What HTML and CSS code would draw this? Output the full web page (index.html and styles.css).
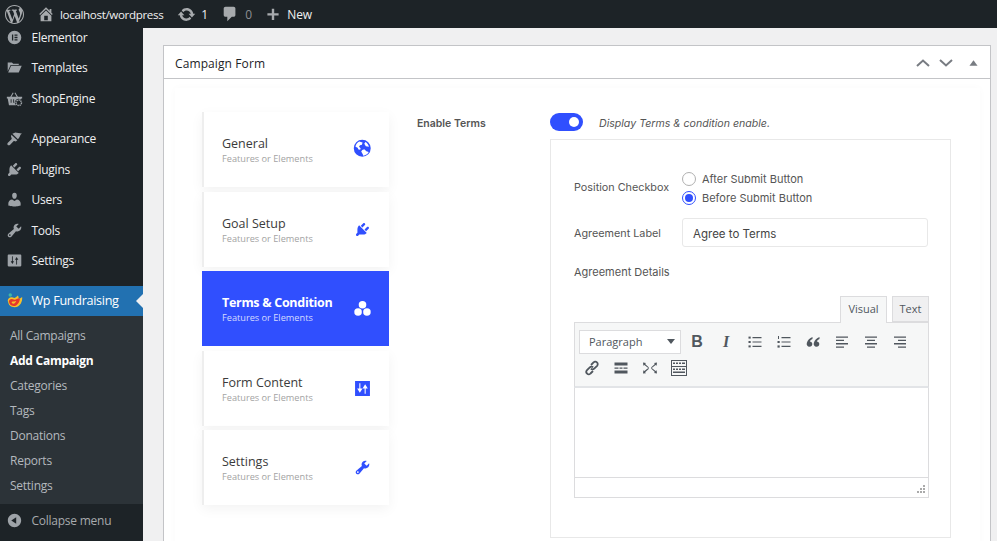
FILE: index.html
```html
<!DOCTYPE html>
<html lang="en">
<head>
<meta charset="utf-8">
<title>Add Campaign</title>
<link rel="stylesheet" href="styles.css">
</head>
<body>
<header class="adminbar">
  <svg class="bar-logo" viewBox="0 0 20 20"><path fill-rule="evenodd" d="M20 10c0-5.51-4.49-10-10-10C4.48 0 0 4.49 0 10c0 5.52 4.48 10 10 10 5.51 0 10-4.48 10-10zM7.78 15.37L4.37 6.22c.55-.02 1.17-.08 1.17-.08.5-.06.44-1.13-.06-1.11 0 0-1.45.11-2.37.11-.18 0-.37 0-.58-.01C4.12 2.69 6.87 1.11 10 1.11c2.33 0 4.45.87 6.05 2.34-.68-.11-1.65.39-1.65 1.58 0 .74.45 1.36.9 2.1.35.61.55 1.36.55 2.46 0 1.49-1.4 5-1.4 5l-3.03-8.37c.54-.02.82-.17.82-.17.5-.05.44-1.25-.06-1.22 0 0-1.44.12-2.38.12-.87 0-2.33-.12-2.33-.12-.5-.03-.56 1.2-.06 1.22l.92.08 1.26 3.41zM17.41 10c.24-.64.74-1.87.43-4.25.7 1.29 1.05 2.71 1.05 4.25 0 3.29-1.73 6.24-4.4 7.78.97-2.59 1.94-5.2 2.92-7.78zM6.1 18.09C3.12 16.65 1.11 13.53 1.11 10c0-1.3.23-2.48.72-3.59C3.25 10.3 4.67 14.2 6.1 18.09zm4.03-6.63l2.58 6.98c-.86.29-1.76.45-2.71.45-.79 0-1.57-.11-2.29-.33.81-2.38 1.62-4.74 2.42-7.1z"/></svg>
  <svg class="bar-icon home" viewBox="0 0 20 20"><path fill-rule="evenodd" d="M16 8.5l1.53 1.53-1.06 1.06L10 4.62l-6.47 6.47-1.06-1.06L10 2.5l4 4v-2h2v4zm-6-2.46l6 5.99V18H4v-5.97zM12 17v-5H8v5h4z"/></svg>
  <span class="bar-text site">localhost/wordpress</span>
  <svg class="bar-icon updates" viewBox="0 0 20 20"><path d="M10.2 3.28c3.53 0 6.43 2.61 6.92 6h2.08l-3.5 4-3.5-4h2.32c-.45-1.97-2.21-3.45-4.32-3.45-1.45 0-2.73.71-3.54 1.78L4.95 5.66C6.23 4.2 8.11 3.28 10.2 3.28zm-.4 13.44c-3.52 0-6.43-2.61-6.92-6H.8l3.5-4c1.17 1.33 2.33 2.67 3.5 4H5.48c.45 1.97 2.21 3.45 4.32 3.45 1.45 0 2.73-.71 3.54-1.78l1.71 1.95c-1.28 1.46-3.15 2.38-5.25 2.38z"/></svg>
  <span class="bar-text count">1</span>
  <svg class="bar-icon comment" viewBox="0 0 20 20"><path d="M5 2h9c1.1 0 2 .9 2 2v7c0 1.1-.9 2-2 2h-2l-5 5v-5H5c-1.1 0-2-.9-2-2V4c0-1.1.9-2 2-2z"/></svg>
  <span class="bar-text zero">0</span>
  <svg class="bar-icon plus" viewBox="0 0 20 20"><path d="M17 9v3h-5.5v5.500h-3V12H3V9h5.500V3.500h3V9z"/></svg>
  <span class="bar-text">New</span>
</header>

<div class="shell">
  <aside class="sidebar">
    <nav class="menu">
      <a class="item first">
        <svg class="mi" viewBox="0 0 20 20"><path fill-rule="evenodd" d="M10 2a8 8 0 1 1 0 16 8 8 0 0 1 0-16zM7 6.500v7h1.500v-7zm3 0V8h3.500V6.500zm0 2.750v1.500h3.500v-1.500zM10 12v1.500h3.500V12z"/></svg>
        <span>Elementor</span>
      </a>
      <a class="item">
        <svg class="mi" viewBox="0 0 20 20"><path d="M2 4h5l1.500 1.500H15V7H5.500L2 14.500zM6 8h12.500L15 16H2.500z"/></svg>
        <span>Templates</span>
      </a>
      <a class="item gap-after">
        <svg class="mi" viewBox="0 0 20 20"><path fill-rule="evenodd" d="M1 8h4l3-5 1 .6L6.500 8h6L10 3.600 11 3l3 5h5v2h-1l-.3 1.500a4 4 0 0 0-5.700 6.500H3.500L2 10H1zm4.500 3v4h1v-4zm3 0v4h1v-4z"/><circle cx="15" cy="15" r="3.200" fill="none" stroke="currentColor" stroke-width="1.700" stroke-dasharray="1.600 .8"/></svg>
        <span>ShopEngine</span>
      </a>
      <a class="item">
        <svg class="mi" viewBox="0 0 20 20"><path d="M7.500 4.500 11 3c2 .2 5 .6 8 1.500-1.300.5-2.200 1.300-2.500 2.500-.6 1.500-1.500 3-2.500 4zM6.300 5.500l7 6.500-1.700 1.500c-.8-.5-1.700-.8-2.500-.6L4.600 17.500c-.8.7-2 .7-2.600 0-.6-.7-.5-1.700.2-2.400l4.500-4.400c.2-1-.2-2-.8-2.800z"/></svg>
        <span>Appearance</span>
      </a>
      <a class="item">
        <svg class="mi" viewBox="0 0 20 20"><path d="M13.110 4.360L9.870 7.600 8 5.730l3.240-3.240c.35-.34 1.050-.2 1.560.32.520.51.660 1.210.310 1.550zm-8 1.770l.91-1.120 9.010 9.010-1.190.84c-.71.71-2.630 1.160-3.820 1.160H6.140L4.900 17.260c-.59.59-1.540.59-2.120 0-.59-.58-.59-1.530 0-2.120l1.240-1.240v-3.880c0-1.130.4-3.190 1.090-3.890zm7.260 3.970l3.240-3.240c.34-.35 1.040-.21 1.550.31.520.51.660 1.210.310 1.550l-3.240 3.250z"/></svg>
        <span>Plugins</span>
      </a>
      <a class="item">
        <svg class="mi" viewBox="0 0 20 20"><path d="M10 9.250c-2.270 0-2.730-3.440-2.730-3.440C7 4.020 7.820 2 9.970 2c2.160 0 2.980 2.020 2.710 3.810 0 0-.41 3.440-2.680 3.440zm0 2.570L12.720 10c2.390 0 4.520 2.330 4.520 4.530v2.490s-3.650 1.130-7.240 1.130c-3.650 0-7.240-1.130-7.240-1.130v-2.490c0-2.250 1.940-4.480 4.470-4.480z"/></svg>
        <span>Users</span>
      </a>
      <a class="item">
        <svg class="mi" viewBox="0 0 20 20"><path fill-rule="evenodd" d="M16.680 9.770c-1.340 1.340-3.300 1.670-4.950.99l-5.410 6.520c-.99.99-2.590.99-3.580 0s-.99-2.590 0-3.570l6.520-5.420c-.68-1.650-.35-3.610.99-4.950 1.280-1.280 3.120-1.620 4.720-1.060l-2.890 2.890 2.820 2.820 2.860-2.870c.53 1.580.18 3.390-1.080 4.650zM3.810 16.210c.4.390 1.040.39 1.430 0 .4-.4.4-1.040 0-1.430-.39-.4-1.030-.4-1.430 0-.39.39-.39 1.030 0 1.430z"/></svg>
        <span>Tools</span>
      </a>
      <a class="item">
        <svg class="mi" viewBox="0 0 20 20"><path fill-rule="evenodd" d="M18 16V4c0-.55-.45-1-1-1H3c-.55 0-1 .45-1 1v12c0 .55.45 1 1 1h14c.55 0 1-.45 1-1zM8 11h1.500L7.500 14 5.500 11H7V5.500c0-.28.22-.5.5-.5s.5.22.5.5zm5-2v5.500c0 .28-.22.5-.5.5s-.5-.22-.5-.5V9h-1.500l2-3 2 3z"/></svg>
        <span>Settings</span>
      </a>
      <a class="item current">
        <svg class="mi logo" viewBox="0 0 20 20"><circle cx="5" cy="3.500" r="2" fill="#3fb8a8"/><path fill="#f6c02b" d="M2 11c0-3.500 3-5.500 6-4.500 2 .7 3 .5 4-.5l2-2c1 1.500 1 3 .5 4 2 0 3.500-1 4.500-2 .5 5-2 12-9 12-4.500 0-7.500-3-7.500-7z"/><path fill="#e5372c" d="M3.500 11c0-2.500 2.500-3.500 4.500-2.500s3.500.5 5-.5c1-.5 2.500-.5 3.500-.5-.5 4-3 9-7.500 9-3.500 0-5.500-2.500-5.500-5.500z"/><path fill="#f6c02b" d="M7 11.500c1.500-.8 3.500 0 5-.8-.5 1.800-2 3.300-3.800 3-1.200-.2-2-1.300-1.200-2.200z"/></svg>
        <span>Wp Fundraising</span>
      </a>
    </nav>
    <ul class="submenu">
      <li>All Campaigns</li>
      <li class="on">Add Campaign</li>
      <li>Categories</li>
      <li>Tags</li>
      <li>Donations</li>
      <li>Reports</li>
      <li>Settings</li>
    </ul>
    <div class="collapse">
      <svg class="mi" viewBox="0 0 20 20"><path d="M10 2.160c4.330 0 7.840 3.510 7.840 7.840s-3.510 7.840-7.840 7.840S2.160 14.330 2.160 10 5.710 2.160 10 2.160zm2 11.720V6.120L6.180 9.970z"/></svg>
      <span>Collapse menu</span>
    </div>
  </aside>

  <main class="main">
    <section class="postbox">
      <div class="postbox-head">
        <h2>Campaign Form</h2>
        <div class="handles">
          <svg class="chev" viewBox="0 0 14 8"><path d="M1 7l6-5.500L13 7"/></svg>
          <svg class="chev" viewBox="0 0 14 8"><path d="M1 1l6 5.500L13 1"/></svg>
          <svg class="tri" viewBox="0 0 10 6"><path d="M5 0l4.500 6H.5z"/></svg>
        </div>
      </div>
      <div class="postbox-body">
        <div class="panel">
          <div class="tabs">
            <div class="tab">
              <div class="tab-text"><strong>General</strong><small>Features or Elements</small></div>
              <svg class="tab-icon globe" viewBox="0 0 18 18"><path fill-rule="evenodd" d="M9 .75a8.250 8.250 0 1 1 0 16.500A8.250 8.250 0 0 1 9 .75zM6 2.500C4 3.500 2.600 5.500 2.400 7.600l2.100 1 .8 1.600 1.700.3.400-1.500L5.800 7.500l1-1.500 1.900-.5.600-2.200zM11 10l-2 .6-1 1.600 1.500 2.600.5 1.500c2.300-.2 4.200-1.600 5.300-3.600L13 11.800zM12 3l-1 1.500 1.500 2.500 3 .5C15 5.500 13.800 4 12 3z"/></svg>
            </div>
            <div class="tab">
              <div class="tab-text"><strong>Goal Setup</strong><small>Features or Elements</small></div>
              <svg class="tab-icon" viewBox="0 0 20 20"><path d="M13.110 4.360L9.870 7.600 8 5.730l3.240-3.240c.35-.34 1.050-.2 1.560.32.520.51.660 1.210.310 1.550zm-8 1.770l.91-1.120 9.010 9.010-1.190.84c-.71.71-2.630 1.160-3.820 1.160H6.140L4.900 17.260c-.59.59-1.540.59-2.120 0-.59-.58-.59-1.530 0-2.120l1.240-1.240v-3.880c0-1.130.4-3.190 1.090-3.890zm7.260 3.970l3.240-3.240c.34-.35 1.040-.21 1.550.31.520.51.660 1.210.310 1.550l-3.240 3.250z"/></svg>
            </div>
            <div class="tab active">
              <div class="tab-text"><strong>Terms &amp; Condition</strong><small>Features or Elements</small></div>
              <svg class="tab-icon" viewBox="0 0 18 18"><circle cx="9" cy="5" r="4"/><circle cx="4.300" cy="12.800" r="4"/><circle cx="13.700" cy="12.800" r="4"/></svg>
            </div>
            <div class="tab">
              <div class="tab-text"><strong>Form Content</strong><small>Features or Elements</small></div>
              <svg class="tab-icon" viewBox="0 0 16 16"><path fill-rule="evenodd" d="M1 1h14v14H1zM5 3v5H3l2.500 4L8 8H6V3zm5.500 1L8 8h2v5h1V8h2z"/></svg>
            </div>
            <div class="tab">
              <div class="tab-text"><strong>Settings</strong><small>Features or Elements</small></div>
              <svg class="tab-icon" viewBox="0 0 20 20"><path fill-rule="evenodd" d="M16.680 9.770c-1.340 1.340-3.300 1.670-4.950.99l-5.410 6.520c-.99.99-2.590.99-3.580 0s-.99-2.590 0-3.570l6.520-5.420c-.68-1.650-.35-3.610.99-4.950 1.280-1.280 3.120-1.620 4.720-1.060l-2.890 2.890 2.820 2.820 2.860-2.870c.53 1.580.18 3.390-1.080 4.650zM3.810 16.210c.4.390 1.040.39 1.430 0 .4-.4.4-1.040 0-1.430-.39-.4-1.030-.4-1.430 0-.39.39-.39 1.030 0 1.430z"/></svg>
            </div>
          </div>

          <div class="form">
            <div class="enable-row">
              <span class="enable-label">Enable Terms</span>
              <span class="toggle"><i></i></span>
              <em>Display Terms &amp; condition enable.</em>
            </div>
            <div class="card">
              <div class="field radios-field">
                <span class="field-label">Position Checkbox</span>
                <div class="radios">
                  <label class="radio"><i></i>After Submit Button</label>
                  <label class="radio checked"><i></i>Before Submit Button</label>
                </div>
              </div>
              <div class="field input-field">
                <span class="field-label">Agreement Label</span>
                <div class="input">Agree to Terms</div>
              </div>
              <div class="details-label">Agreement Details</div>
              <div class="editor">
                <div class="editor-tabs">
                  <span class="etab active">Visual</span>
                  <span class="etab">Text</span>
                </div>
                <div class="toolbar">
                  <div class="tb-row">
                    <div class="select"><span>Paragraph</span><i></i></div>
                    <span class="tb bold">B</span>
                    <span class="tb italic">I</span>
                    <span class="tb"><svg viewBox="0 0 16 16"><path d="M5.500 3h9v1.200h-9zM5.500 7.400h9v1.200h-9zM5.500 11.800h9V13h-9z"/><rect x="1.500" y="2.600" width="2.200" height="2"/><rect x="1.500" y="7" width="2.200" height="2"/><rect x="1.500" y="11.400" width="2.200" height="2"/></svg></span>
                    <span class="tb"><svg viewBox="0 0 16 16"><path d="M5.500 3h9v1.200h-9zM5.500 7.400h9v1.200h-9zM5.500 11.800h9V13h-9z"/><rect x="2" y="2" width="1" height="3"/><rect x="1.500" y="7" width="2.200" height="2"/><rect x="1.500" y="11.400" width="2.200" height="2.200"/></svg></span>
                    <span class="tb"><svg viewBox="0 0 16 16"><path d="M7.500 3C4.800 4 2.500 6.300 1.800 9c-.5 2 .7 3.700 2.600 3.700S7.300 11.500 7.300 10 6.200 7.600 4.800 7.500c.4-1 1.400-1.900 2.700-2.400zM14.500 3c-2.700 1-5 3.300-5.700 6-.5 2 .7 3.700 2.600 3.700s2.900-1.200 2.900-2.700-1.100-2.400-2.500-2.500c.4-1 1.400-1.900 2.700-2.400z"/></svg></span>
                    <span class="tb"><svg viewBox="0 0 16 16"><path d="M2 2.500h12v1.300H2zM2 5.800h8v1.300H2zM2 9.100h12v1.300H2zM2 12.400h8v1.300H2z"/></svg></span>
                    <span class="tb"><svg viewBox="0 0 16 16"><path d="M2 2.500h12v1.300H2zM4 5.800h8v1.300H4zM2 9.100h12v1.300H2zM4 12.400h8v1.300H4z"/></svg></span>
                    <span class="tb"><svg viewBox="0 0 16 16"><path d="M2 2.500h12v1.300H2zM6 5.800h8v1.300H6zM2 9.100h12v1.300H2zM6 12.400h8v1.300H6z"/></svg></span>
                  </div>
                  <div class="tb-row second">
                    <span class="tb"><svg viewBox="0 0 16 16"><g fill="none" stroke="currentColor" stroke-width="1.800"><path d="M7 5l2.500-2.500a2.300 2.300 0 0 1 3.600 3.300L10.200 8.700a2.300 2.300 0 0 1-3.300 0"/><path d="M9 11l-2.500 2.500A2.300 2.300 0 0 1 3 10.200L5.800 7.300a2.300 2.300 0 0 1 3.300 0"/></g></svg></span>
                    <span class="tb"><svg viewBox="0 0 16 16"><path d="M1.500 2.500h13v3h-13zM1.500 10.500h13v3h-13zM1.500 7.500h4v1.200h-4zM6.500 7.500h3v1.200h-3zM10.500 7.500h4v1.200h-4z"/></svg></span>
                    <span class="tb"><svg viewBox="0 0 16 16"><path d="M1 2.500l3 .4-.9 1L7 7.400 6.300 8.100 2.400 4.900l-1 .9zM15 2.500l-.4 3.300-1-.9L9.700 8.100 9 7.400l3.900-3.500-.9-1zM1 13.500l.4-3.300 1 .9 3.900-3 .7.7-3.900 3.500.9 1zM15 13.500l-3-.4.9-1L9 8.600l.7-.7 3.900 3.200 1-.9z"/></svg></span>
                    <span class="tb kitchen"><svg viewBox="0 0 18 18"><path fill-rule="evenodd" d="M1 1h16v16H1zM2 2v5h14V2zm0 6v8h14V8zM3 3.500h2V5H3zm3 0h2V5H6zm3 0h2V5H9zm3 0h3V5h-3zM3 9.500h2V11H3zm3 0h2V11H6zm3 0h2V11H9zm3 0h3V11h-3zM3 12.500h12V14H3z"/></svg></span>
                  </div>
                </div>
                <div class="edit-area"></div>
                <div class="statusbar">
                  <svg class="grip" viewBox="0 0 9 9"><path d="M7 0h2v2H7zM7 3h2v2H7zM4 3h2v2H4zM7 6h2v2H7zM4 6h2v2H4zM1 6h2v2H1z"/></svg>
                </div>
              </div>
            </div>
          </div>
        </div>
      </div>
    </section>
  </main>
</div>
</body>
</html>
```

FILE: styles.css
```css
* { box-sizing: border-box; }
html, body { margin: 0; height: 541px; overflow: hidden; }
body {
  display: flex;
  flex-direction: column;
  background: #f0f0f1;
  font-family: "Open Sans", "Noto Sans", sans-serif;
  font-size: 12px;
  letter-spacing: -.25px;
  color: #3c434a;
}

/* admin bar */
.adminbar {
  height: 28px;
  flex: none;
  background: #1d2327;
  color: #f0f0f1;
  display: flex;
  align-items: center;
  padding-left: 5px;
  position: relative;
  z-index: 2;
}
.adminbar svg { fill: #a7aaad; flex: none; }
.bar-logo { width: 19px; height: 19px; margin-right: 13px; }
.bar-icon { width: 18px; height: 18px; }
.bar-text { font-size: 12px; color: #f0f0f1; }
.site { margin: 0 14px 0 5px; font-size: 11.600px; letter-spacing: -.35px; }
.updates { width: 19px; height: 19px; margin-right: 5px; }
.count { margin-right: 13px; width: 7px; }
.comment { margin-right: 6px; }
.zero { color: #8c8f94; margin-right: 13px; width: 7px; }
.plus { margin-right: 6px; width: 16px; height: 16px; }

.shell { flex: 1; display: flex; min-height: 0; }

/* sidebar */
.sidebar {
  width: 143px;
  flex: none;
  background: #1d2327;
  display: flex;
  flex-direction: column;
  overflow: hidden;
}
.menu { display: flex; flex-direction: column; margin-top: -6.100px; }
.item {
  height: 30.600px;
  display: flex;
  align-items: center;
  padding-left: 6px;
  color: #f0f0f1;
  position: relative;
}
.mi {
  width: 17px;
  height: 17px;
  flex: none;
  fill: #9ea3a8;
  color: #9ea3a8;
  margin-right: 8.500px;
}
.gap-after { margin-bottom: 9.500px; }
.current {
  height: 30px;
  margin-top: 9.800px;
  background: #2271b1;
  color: #fff;
  font-size: 12.600px;
  letter-spacing: -.3px;
}
.current::after {
  content: "";
  position: absolute;
  right: 0;
  top: 8px;
  border: 7px solid transparent;
  border-left-width: 0;
  border-right-color: #f0f0f1;
}
.submenu {
  list-style: none;
  margin: 0;
  padding: 7.500px 0 5.500px;
  background: #2c3338;
  color: #b4b9be;
  font-size: 12px;
  flex: none;
}
.submenu li { height: 25px; line-height: 25px; padding-left: 10px; }
.submenu .on { color: #fff; font-weight: 700; }
.collapse {
  flex: 1;
  display: flex;
  align-items: center;
  padding: 0 0 3px 6px;
  color: #a7aaad;
}

/* main */
.main { flex: 1; padding: 17px 6px 0 20px; min-width: 0; }
.postbox {
  background: #fff;
  border: 1px solid #c3c4c7;
  height: 520px;
}
.postbox-head {
  height: 33px;
  border-bottom: 1px solid #c3c4c7;
  display: flex;
  align-items: center;
  justify-content: space-between;
  padding: 2px 12px 0 11px;
}
.postbox-head h2 {
  margin: 0;
  font-size: 12px;
  font-weight: 400;
  color: #1d2327;
  letter-spacing: .1px;
}
.handles { display: flex; align-items: center; }
.chev { width: 14px; height: 8px; fill: none; stroke: #787c82; stroke-width: 2; margin-right: 9px; }
.tri { width: 9px; height: 6px; fill: #787c82; margin-left: 7px; }
.postbox-body { padding: 9px 10px 0 11px; }
.panel {
  display: flex;
  gap: 28px;
  padding: 24px 29px 0 27px;
  box-shadow: 0 0 8px rgba(0, 0, 0, .025);
  height: 470px;
}

/* tabs */
.tabs { width: 187px; flex: none; display: flex; flex-direction: column; gap: 4.500px; }
.tab {
  height: 75px;
  background: #fff;
  border-left: 2px solid #eeeeee;
  box-shadow: 0 4px 12px rgba(0, 0, 0, .05);
  display: flex;
  align-items: center;
  justify-content: space-between;
  padding: 0 18.500px 0 18px;
}
.tab-text { display: flex; flex-direction: column; margin-top: 2px; }
.tab strong { font-size: 12.500px; font-weight: 400; color: #3b3b3b; line-height: 16px; letter-spacing: 0; }
.tab small { font-size: 9.200px; color: #a3a3a3; line-height: 13px; letter-spacing: 0; }
.tab-icon { width: 17px; height: 17px; fill: #304ffe; flex: none; }
.globe { width: 18.500px; height: 18.500px; margin-top: -3px; margin-right: -.5px; }
.active { background: #304ffe; border-left-color: #304ffe; box-shadow: none; }
.active strong { color: #fff; font-weight: 700; letter-spacing: -.3px; }
.active small { color: #d5dbff; }
.active .tab-icon { fill: #fff; }

/* form */
.form { flex: 1; min-width: 0; font-family: Inter, "Open Sans", sans-serif; letter-spacing: 0; }
.enable-row { display: flex; align-items: center; height: 18px; margin-top: 1px; }
.enable-label { width: 133px; font-size: 10.500px; font-weight: 600; color: #555; padding-top: 2px; }
.toggle {
  width: 33px;
  height: 18px;
  border-radius: 9px;
  background: #304ffe;
  display: flex;
  align-items: center;
  justify-content: flex-end;
  padding-right: 4px;
  margin-right: 16px;
}
.toggle i { width: 10px; height: 10px; border-radius: 50%; background: #fff; }
.enable-row em { font-size: 10.600px; color: #555; padding-top: 2px; }
.card {
  margin: 8px 0 0 133px;
  height: 399px;
  border: 1px solid #e8e8e8;
  padding: 29px 22px 0 23px;
}
.field { display: flex; align-items: center; }
.field-label { width: 108px; flex: none; font-size: 10.800px; color: #555; }
.radios-field .field-label { padding-bottom: 1px; }
.input-field .field-label { padding-top: 2px; }
.radios { display: flex; flex-direction: column; }
.radio { display: flex; align-items: center; height: 19px; font-size: 11px; color: #555; }
.radio i {
  width: 14px;
  height: 14px;
  border-radius: 50%;
  border: 1px solid #b0b0b0;
  margin-right: 6px;
  display: flex;
  align-items: center;
  justify-content: center;
}
.checked i { border-color: #304ffe; }
.checked i::after { content: ""; width: 8px; height: 8px; border-radius: 50%; background: #304ffe; }
.input-field { margin-top: 11px; }
.input {
  flex: 1;
  height: 29px;
  border: 1px solid #e8e8e8;
  border-radius: 3px;
  padding: 2px 0 0 10px;
  display: flex;
  align-items: center;
  font-size: 11.500px;
  color: #444;
}
.details-label { margin-top: 17px; line-height: 17px; font-size: 11px; color: #555; }

/* editor */
.editor { margin-top: 15px; font-family: "Open Sans", sans-serif; margin-right: -1px; }
.editor-tabs { display: flex; justify-content: flex-end; gap: 5px; height: 26px; position: relative; z-index: 1; }
.etab {
  height: 26px;
  width: 37px;
  border: 1px solid #dcdcde;
  background: #f0f0f1;
  color: #50575e;
  font-size: 11px;
  display: flex;
  align-items: center;
  justify-content: center;
  padding-bottom: 2px;
}
.etab.active { width: 47px; height: 27px; background: #f6f7f7; border-bottom: none; padding-bottom: 3px; }
.toolbar {
  height: 66px;
  background: #f6f7f7;
  border: 1px solid #dcdcde;
  border-bottom: 2px solid #e2e4e7;
  padding: 5px 0 0 4px;
}
.tb-row { display: flex; align-items: center; height: 27px; }
.second { margin-left: -1.500px; margin-top: -.5px; }
.select {
  width: 102px;
  height: 24px;
  border: 1px solid #dcdcde;
  background: #fff;
  display: flex;
  align-items: center;
  justify-content: space-between;
  padding: 0 5px 0 9px;
  font-size: 11px;
  color: #50575e;
  margin-right: 1.500px;
}
.select i {
  width: 0;
  height: 0;
  border: 4px solid transparent;
  border-top: 5px solid #50575e;
  border-bottom: none;
}
.tb {
  width: 29px;
  height: 27px;
  flex: none;
  display: flex;
  align-items: center;
  justify-content: center;
  color: #50575e;
}
.tb svg { width: 16px; height: 16px; fill: #50575e; color: #50575e; }
.bold { font-size: 16px; font-weight: 700; font-family: "Liberation Sans", sans-serif; }
.italic { font-size: 16px; font-style: italic; font-weight: 700; font-family: "Liberation Serif", serif; }
.kitchen svg { width: 18px; height: 18px; }
.edit-area { height: 89px; background: #fff; border-left: 1px solid #dcdcde; border-right: 1px solid #dcdcde; }
.statusbar {
  height: 21px;
  border: 1px solid #dcdcde;
  display: flex;
  justify-content: flex-end;
  align-items: flex-end;
  padding: 0 3px 3px 0;
}
.grip { width: 9px; height: 9px; fill: #aaa; }
```
